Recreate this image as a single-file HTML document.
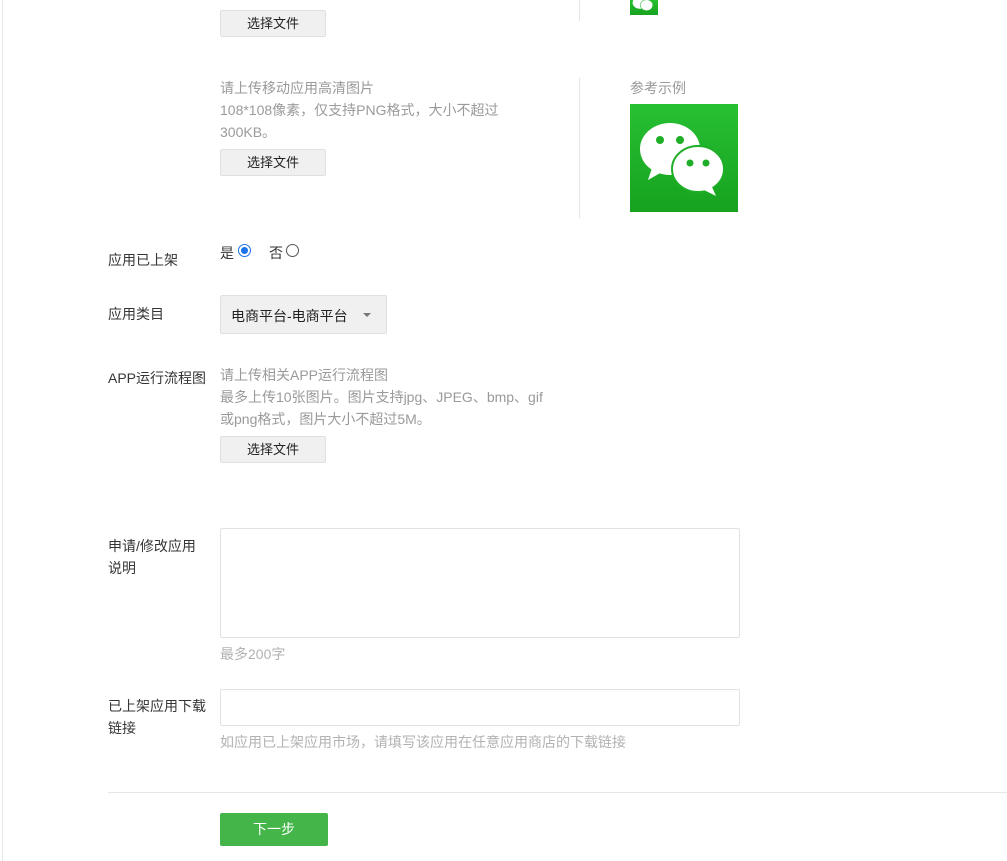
<!DOCTYPE html>
<html><head><meta charset="utf-8"><style>
body{margin:0;width:1007px;height:861px;background:#fff;font-family:"Liberation Sans","Noto Sans CJK SC",sans-serif;font-size:14px;color:#353535;position:relative;overflow:hidden}
.a{position:absolute}
.btn{position:absolute;width:104px;height:25px;background:#f0f0f0;border:1px solid #e0e0e0;border-radius:2px;text-align:center;line-height:25px;color:#222;font-size:13px}
.hint{color:#9a9a9a;line-height:22px}
.lbl{color:#353535}
.icon{background:linear-gradient(#27c033,#17a21f)}
.box{position:absolute;border:1px solid #e2e2e2;border-radius:2px;background:#fff}
</style></head><body>
<div class="a" style="left:2px;top:0;width:1px;height:861px;background:#e6e6e6"></div>
<div class="btn" style="left:220px;top:10px">选择文件</div>
<div class="a" style="left:579px;top:0;width:1px;height:21px;background:#e6e6e6"></div>
<div class="a icon" style="left:630px;top:0;width:28px;height:15px;overflow:hidden"><svg width="28" height="15" viewBox="0 0 108 58"><ellipse cx="38" cy="10" rx="28" ry="24" fill="#fff"/><ellipse cx="64" cy="20" rx="24" ry="21" fill="#fff" stroke="#1fae28" stroke-width="2"/></svg></div>

<div class="a hint" style="left:220px;top:77px">请上传移动应用高清图片<br>108*108像素，仅支持PNG格式，大小不超过<br>300KB。</div>
<div class="btn" style="left:220px;top:149px">选择文件</div>
<div class="a" style="left:579px;top:78px;width:1px;height:140px;background:#e6e6e6"></div>
<div class="a hint" style="left:630px;top:77px">参考示例</div>
<div class="a icon" style="left:630px;top:104px;width:108px;height:108px">
<svg width="108" height="108" viewBox="0 0 108 108">
<ellipse cx="40" cy="45" rx="30" ry="26" fill="#fff"/>
<path d="M22 64 L18 76 L32 68 Z" fill="#fff"/>
<circle cx="30" cy="36" r="4" fill="#1fae28"/><circle cx="50" cy="36" r="4" fill="#1fae28"/>
<ellipse cx="68" cy="65" rx="26" ry="23" fill="#fff" stroke="#1fae28" stroke-width="2"/>
<path d="M82 83 L86 92 L74 86 Z" fill="#fff"/>
<circle cx="60" cy="59" r="3.5" fill="#1fae28"/><circle cx="76" cy="59" r="3.5" fill="#1fae28"/>
</svg></div>

<div class="a lbl" style="left:108px;top:250px">应用已上架</div>
<div class="a" style="left:220px;top:243px">是</div>
<div class="a" style="left:238px;top:244px;width:13px;height:13px;border:1px solid #1a73e8;border-radius:50%;box-sizing:border-box"><div style="margin:2px;width:7px;height:7px;border-radius:50%;background:#1a73e8"></div></div>
<div class="a" style="left:269px;top:243px">否</div>
<div class="a" style="left:286px;top:244px;width:13px;height:13px;border:1px solid #555;border-radius:50%;box-sizing:border-box"></div>

<div class="a lbl" style="left:108px;top:304px">应用类目</div>
<div class="a" style="left:220px;top:295px;width:167px;height:39px;background:#f0f0f0;border:1px solid #e0e0e0;border-radius:2px;box-sizing:border-box"></div>
<div class="a" style="left:231px;top:306px;color:#222">电商平台-电商平台</div>
<div class="a" style="left:363px;top:313px;width:0;height:0;border-left:4px solid transparent;border-right:4px solid transparent;border-top:4px solid #777"></div>

<div class="a lbl" style="left:108px;top:368px">APP运行流程图</div>
<div class="a hint" style="left:220px;top:364px">请上传相关APP运行流程图<br>最多上传10张图片。图片支持jpg、JPEG、bmp、gif<br>或png格式，图片大小不超过5M。</div>
<div class="btn" style="left:220px;top:436px">选择文件</div>

<div class="a lbl" style="left:108px;top:535px;line-height:22px">申请/修改应用<br>说明</div>
<div class="box" style="left:220px;top:528px;width:518px;height:108px"></div>
<div class="a" style="left:220px;top:644px;color:#b2b2b2">最多200字</div>

<div class="a lbl" style="left:108px;top:695px;line-height:22px">已上架应用下载<br>链接</div>
<div class="box" style="left:220px;top:689px;width:518px;height:35px"></div>
<div class="a" style="left:220px;top:732px;color:#b2b2b2">如应用已上架应用市场，请填写该应用在任意应用商店的下载链接</div>

<div class="a" style="left:108px;top:792px;width:899px;height:1px;background:#e6e6e6"></div>
<div class="a" style="left:220px;top:813px;width:108px;height:33px;background:#44b549;border-radius:2px;color:#fff;text-align:center;line-height:33px">下一步</div>
</body></html>
